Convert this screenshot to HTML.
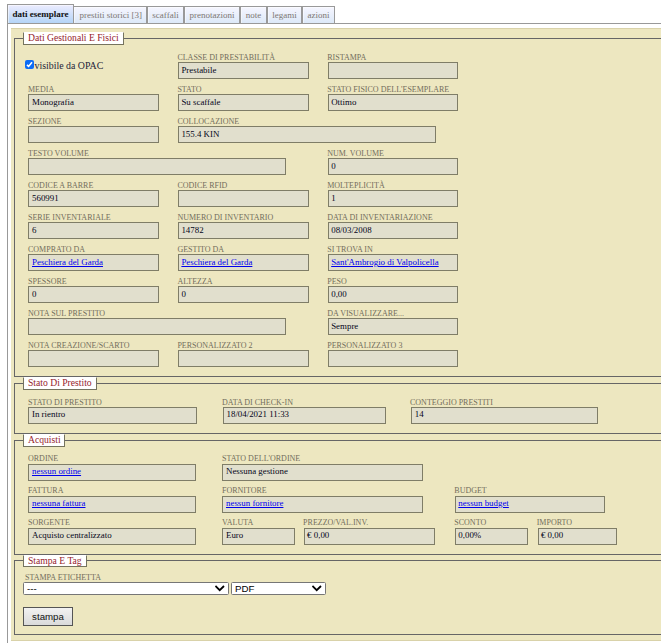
<!DOCTYPE html>
<html><head><meta charset="utf-8">
<style>
html,body{margin:0;padding:0;background:#fff;}
body{width:661px;height:643px;overflow:hidden;position:relative;font-family:"Liberation Serif",serif;}
div{position:absolute;box-sizing:content-box;}
.tab{border:1px solid #999;border-bottom:none;background:linear-gradient(#f6f6ff,#dde9f8);font-size:9px;color:#7d7773;text-align:center;line-height:17px;box-shadow:inset 1px 1px 0 rgba(255,255,255,.5);white-space:nowrap;}
.tab.act{background:linear-gradient(#ececff,#b5d5f7);color:#111;font-weight:bold;line-height:19px;}
.bar{left:7px;top:23px;width:660px;height:1px;background:#999;}
.pl{left:7px;top:23px;width:1px;height:630px;background:#999;}
.bg{left:11px;top:28px;width:660px;height:613px;background:#ede7c0;}
.bgt{left:11px;top:28px;width:660px;height:1px;background:#d9d2a9;}
.bgb{left:11px;top:640px;width:660px;height:1px;background:#d9d2a9;}
.fs{left:14px;width:700px;border:1px solid #666;}
.lg{left:23px;height:11px;background:#fff;border:1px solid #75735e;border-top-color:#fff;font-size:9.65px;color:#961d2d;line-height:9px;padding:0 0 0 4px;white-space:nowrap;}
.lb{font-size:8px;color:#726d5c;line-height:12px;white-space:nowrap;}
.in{height:15px;background:#e1dfcd;border:1px solid #7f7d67;}
.in span{position:absolute;left:3px;top:0;line-height:15px;font-size:8.9px;color:#05051a;white-space:nowrap;}
.in a{color:#00e;text-decoration:underline;-webkit-text-stroke:0;}
.cb{left:25px;top:60px;width:9px;height:9px;border-radius:2px;background:#0b6cf6;}
.cb svg{position:absolute;left:0;top:0;}
.ck{left:34.5px;top:58px;font-size:9.9px;color:#1e1e3a;line-height:16px;white-space:nowrap;}
.sel{top:582px;height:11px;background:#fff;border:1px solid #767676;border-radius:1.5px;font-family:"Liberation Sans",sans-serif;font-size:9.7px;color:#000;line-height:11px;}
.sel span{position:absolute;left:3px;top:0;}
.sel .chev{position:absolute;right:3px;top:2px;}
.btn{left:23px;top:607px;width:48px;height:17px;border:1px solid #555;background:linear-gradient(#f2f2f2,#dadada);font-family:"Liberation Sans",sans-serif;font-size:9.7px;color:#111;text-align:center;line-height:17px;}
</style></head><body>
<div class="pl"></div>
<div class="bar"></div>
<div class="bg"></div>
<div class="bgt"></div>
<div class="bgb"></div>
<div class="tab" style="left:73px;top:6px;width:72px;height:16px;text-indent:1.5px;">prestiti storici [3]</div>
<div class="tab" style="left:147px;top:6px;width:35px;height:16px;">scaffali</div>
<div class="tab" style="left:184px;top:6px;width:54px;height:16px;">prenotazioni</div>
<div class="tab" style="left:240px;top:6px;width:25px;height:16px;">note</div>
<div class="tab" style="left:267px;top:6px;width:33px;height:16px;">legami</div>
<div class="tab" style="left:302px;top:6px;width:31px;height:16px;">azioni</div>
<div class="tab act" style="left:7px;top:4px;width:65px;height:18px;">dati esemplare</div>
<div class="fs" style="top:38px;height:337px"></div>
<div class="fs" style="top:383px;height:49px"></div>
<div class="fs" style="top:440px;height:113px"></div>
<div class="fs" style="top:560px;height:73px"></div>
<div class="lg" style="top:32px;height:11px;width:95px">Dati Gestionali E Fisici</div>
<div class="lg" style="top:377px;height:11px;width:68px">Stato Di Prestito</div>
<div class="lg" style="top:434px;height:11px;width:36px">Acquisti</div>
<div class="lg" style="top:555px;height:10px;width:58px">Stampa E Tag</div>
<div class="cb"><svg width="9" height="9" viewBox="0 0 9 9"><path d="M2 4.9 L3.6 6.4 L7 2.3" stroke="#fff" stroke-width="1.6" fill="none"/></svg></div>
<div class="ck">visibile da OPAC</div>
<div class="lb" style="left:177.4px;top:52px">CLASSE DI PRESTABILITÀ</div>
<div class="in" style="left:178px;top:62px;width:129px"><span style="left:2.4px;top:0px">Prestabile</span></div>
<div class="lb" style="left:327.2px;top:52px">RISTAMPA</div>
<div class="in" style="left:328px;top:62px;width:128px"><span style="left:2.2px;top:0px"></span></div>
<div class="lb" style="left:28px;top:84px">MEDIA</div>
<div class="in" style="left:28px;top:94px;width:129px"><span style="left:3px;top:0px">Monografia</span></div>
<div class="lb" style="left:177.4px;top:84px">STATO</div>
<div class="in" style="left:178px;top:94px;width:129px"><span style="left:2.4px;top:0px">Su scaffale</span></div>
<div class="lb" style="left:327.2px;top:84px">STATO FISICO DELL'ESEMPLARE</div>
<div class="in" style="left:328px;top:94px;width:128px"><span style="left:2.2px;top:0px">Ottimo</span></div>
<div class="lb" style="left:28px;top:116px">SEZIONE</div>
<div class="in" style="left:28px;top:126px;width:129px"><span style="left:3px;top:0px"></span></div>
<div class="lb" style="left:177.4px;top:116px">COLLOCAZIONE</div>
<div class="in" style="left:178px;top:126px;width:256px"><span style="left:2.4px;top:0px">155.4 KIN</span></div>
<div class="lb" style="left:28px;top:148px">TESTO VOLUME</div>
<div class="in" style="left:28px;top:158px;width:256px"><span style="left:3px;top:0px"></span></div>
<div class="lb" style="left:327.2px;top:148px">NUM. VOLUME</div>
<div class="in" style="left:328px;top:158px;width:128px"><span style="left:2.2px;top:0px">0</span></div>
<div class="lb" style="left:28px;top:180px">CODICE A BARRE</div>
<div class="in" style="left:28px;top:190px;width:129px"><span style="left:3px;top:0px">560991</span></div>
<div class="lb" style="left:177.4px;top:180px">CODICE RFID</div>
<div class="in" style="left:178px;top:190px;width:129px"><span style="left:2.4px;top:0px"></span></div>
<div class="lb" style="left:327.2px;top:180px">MOLTEPLICITÀ</div>
<div class="in" style="left:328px;top:190px;width:128px"><span style="left:2.2px;top:0px">1</span></div>
<div class="lb" style="left:28px;top:212px">SERIE INVENTARIALE</div>
<div class="in" style="left:28px;top:222px;width:129px"><span style="left:3px;top:0px">6</span></div>
<div class="lb" style="left:177.4px;top:212px">NUMERO DI INVENTARIO</div>
<div class="in" style="left:178px;top:222px;width:129px"><span style="left:2.4px;top:0px">14782</span></div>
<div class="lb" style="left:327.2px;top:212px">DATA DI INVENTARIAZIONE</div>
<div class="in" style="left:328px;top:222px;width:128px"><span style="left:2.2px;top:0px">08/03/2008</span></div>
<div class="lb" style="left:28px;top:244px">COMPRATO DA</div>
<div class="in" style="left:28px;top:254px;width:129px"><span style="left:3px;top:0px"><a>Peschiera del Garda</a></span></div>
<div class="lb" style="left:177.4px;top:244px">GESTITO DA</div>
<div class="in" style="left:178px;top:254px;width:129px"><span style="left:2.4px;top:0px"><a>Peschiera del Garda</a></span></div>
<div class="lb" style="left:327.2px;top:244px">SI TROVA IN</div>
<div class="in" style="left:328px;top:254px;width:128px"><span style="left:2.2px;top:0px"><a>Sant'Ambrogio di Valpolicella</a></span></div>
<div class="lb" style="left:28px;top:276px">SPESSORE</div>
<div class="in" style="left:28px;top:286px;width:129px"><span style="left:3px;top:0px">0</span></div>
<div class="lb" style="left:177.4px;top:276px">ALTEZZA</div>
<div class="in" style="left:178px;top:286px;width:129px"><span style="left:2.4px;top:0px">0</span></div>
<div class="lb" style="left:327.2px;top:276px">PESO</div>
<div class="in" style="left:328px;top:286px;width:128px"><span style="left:2.2px;top:0px">0,00</span></div>
<div class="lb" style="left:28px;top:308px">NOTA SUL PRESTITO</div>
<div class="in" style="left:28px;top:318px;width:256px"><span style="left:3px;top:0px"></span></div>
<div class="lb" style="left:327.2px;top:308px">DA VISUALIZZARE...</div>
<div class="in" style="left:328px;top:318px;width:128px"><span style="left:2.2px;top:0px">Sempre</span></div>
<div class="lb" style="left:28px;top:340px">NOTA CREAZIONE/SCARTO</div>
<div class="in" style="left:28px;top:350px;width:129px"><span style="left:3px;top:0px"></span></div>
<div class="lb" style="left:177.4px;top:340px">PERSONALIZZATO 2</div>
<div class="in" style="left:178px;top:350px;width:129px"><span style="left:2.4px;top:0px"></span></div>
<div class="lb" style="left:327.2px;top:340px">PERSONALIZZATO 3</div>
<div class="in" style="left:328px;top:350px;width:128px"><span style="left:2.2px;top:0px"></span></div>
<div class="lb" style="left:28px;top:397px">STATO DI PRESTITO</div>
<div class="in" style="left:28px;top:407px;width:167px"><span style="left:3px;top:-1px">In rientro</span></div>
<div class="lb" style="left:222px;top:397px">DATA DI CHECK-IN</div>
<div class="in" style="left:223px;top:407px;width:161px"><span style="left:2.5px;top:-1px">18/04/2021 11:33</span></div>
<div class="lb" style="left:410px;top:397px">CONTEGGIO PRESTITI</div>
<div class="in" style="left:411px;top:407px;width:185px"><span style="left:2.7px;top:-1px">14</span></div>
<div class="lb" style="left:28px;top:453px">ORDINE</div>
<div class="in" style="left:28px;top:464px;width:166px"><span style="left:3px;top:-1px"><a>nessun ordine</a></span></div>
<div class="lb" style="left:222px;top:453px">STATO DELL'ORDINE</div>
<div class="in" style="left:222px;top:464px;width:199px"><span style="left:3px;top:-1px">Nessuna gestione</span></div>
<div class="lb" style="left:28px;top:485px">FATTURA</div>
<div class="in" style="left:28px;top:496px;width:166px"><span style="left:3px;top:-1px"><a>nessuna fattura</a></span></div>
<div class="lb" style="left:222px;top:485px">FORNITORE</div>
<div class="in" style="left:222px;top:496px;width:199px"><span style="left:3px;top:-1px"><a>nessun fornitore</a></span></div>
<div class="lb" style="left:454.3px;top:485px">BUDGET</div>
<div class="in" style="left:455px;top:496px;width:148px"><span style="left:2.3px;top:-1px"><a>nessun budget</a></span></div>
<div class="lb" style="left:28px;top:517px">SORGENTE</div>
<div class="in" style="left:28px;top:528px;width:166px"><span style="left:3px;top:-1px">Acquisto centralizzato</span></div>
<div class="lb" style="left:222px;top:517px">VALUTA</div>
<div class="in" style="left:222px;top:528px;width:71px"><span style="left:3px;top:-1px">Euro</span></div>
<div class="lb" style="left:303.1px;top:517px">PREZZO/VAL.INV.</div>
<div class="in" style="left:304px;top:528px;width:129px"><span style="left:2.1px;top:-1px">€ 0,00</span></div>
<div class="lb" style="left:454.3px;top:517px">SCONTO</div>
<div class="in" style="left:455px;top:528px;width:71px"><span style="left:2.3px;top:-1px">0,00%</span></div>
<div class="lb" style="left:536.7px;top:517px">IMPORTO</div>
<div class="in" style="left:538px;top:528px;width:77px"><span style="left:1.9px;top:-1px">€ 0,00</span></div>
<div class="lb" style="left:25px;top:572px">STAMPA ETICHETTA</div>
<div class="sel" style="left:23px;width:204px"><span>---</span><svg class="chev" width="10" height="7" viewBox="0 0 10 7"><path d="M0.4 1 L4.7 5.2 L9 1" stroke="#000" stroke-width="1.8" fill="none"/></svg></div>
<div class="sel" style="left:231px;width:93px"><span>PDF</span><svg class="chev" width="10" height="7" viewBox="0 0 10 7"><path d="M0.4 1 L4.7 5.2 L9 1" stroke="#000" stroke-width="1.8" fill="none"/></svg></div>
<div class="btn">stampa</div>
</body></html>
